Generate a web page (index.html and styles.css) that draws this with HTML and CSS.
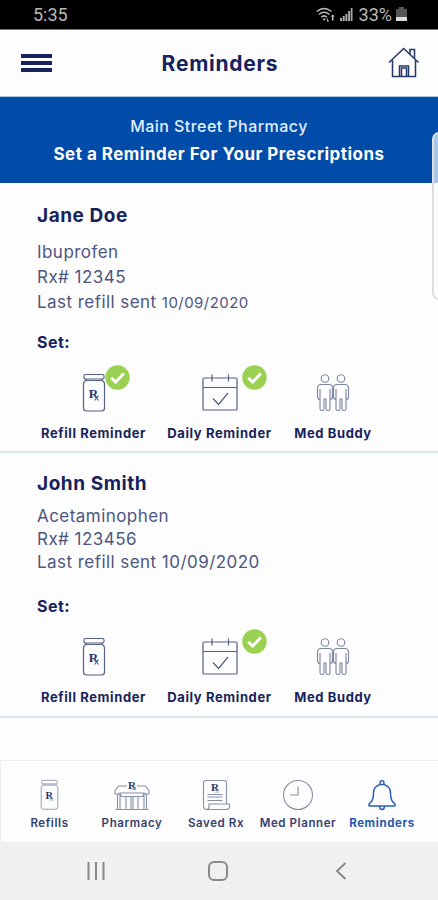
FILE: index.html
```
<!DOCTYPE html>
<html lang="en">
<head>
<meta charset="UTF-8">
<meta name="viewport" content="width=device-width, initial-scale=1">
<title>Reminders</title>
<link rel="stylesheet" href="styles.css">
</head>
<body>
<!-- shared icons -->
<svg class="defs" width="0" height="0">
  <symbol id="bottle" viewBox="0 0 24 40">
    <rect x="2" y="1.500" width="20" height="4.500" rx="1.500"/>
    <path d="M4 6v1.500Q1.500 8.500 1.500 11v24Q1.500 38 4.500 38h15q3 0 3-3V11Q22.500 8.500 20 7.500V6M4 7.500h16"/>
    <text x="11.500" y="25" class="rx">R</text>
    <path d="M12.500 22.500l4 5M16.500 22.500l-4 5"/>
  </symbol>
  <symbol id="calendar" viewBox="0 0 38 38">
    <path d="M3 4h32q1 0 1 1v30q0 1-1 1H3q-1 0-1-1V5q0-1 1-1zM2 13.500h34M11 .5v7M27.500 .5v7M12 24.500l5.500 6L27 19"/>
  </symbol>
  <symbol id="buddy" viewBox="0 0 34 40">
    <g id="person">
      <circle cx="9" cy="5.500" r="3.800"/>
      <path d="M5 11.500h8q3.500 0 3.500 4v8q0 3-2.500 3V36q0 1.500-2 1.500T10 36V26H8v10q0 1.500-2 1.500T4 36v-9.500q-2.500 0-2.500-3v-8q0-4 3.500-4zM4 16v11M14 16v11"/>
    </g>
    <use href="#person" x="16"/>
  </symbol>
  <symbol id="tick" viewBox="0 0 25 25">
    <circle cx="12.500" cy="12.500" r="12.200" fill="#9bd152" stroke="none"/>
    <path d="M6.300 12.700l4.300 4.300 8.200-8.500" fill="none" stroke="#fff" stroke-width="3"/>
  </symbol>
</svg>

<div class="status">
  <span class="time">5:35</span>
  <div class="status-icons">
    <svg width="20" height="16" viewBox="0 0 20 16">
      <g fill="none" stroke="#bbb" stroke-width="1.500"><path d="M.8 4.500Q8 -1.500 15.500 4.500M3 7.500Q8.200 3 13.400 7.500M5.200 10.200Q8.200 7.500 11 10.200"/></g>
      <path d="M6.500 11.500h3.500L8.200 14zM11 14.500v-4l2 4zM14.500 9.500l2.200-2 2.200 2-1.400 0v4h-1.600v-4z" fill="#bbb"/>
    </svg>
    <svg width="13" height="15" viewBox="0 0 13 15"><path fill="#aaa" d="M0 11h2v3H0zM2.700 9h2v5h-2zM5.400 7h2v7h-2zM8.100 4h2v10h-2zM10.800 1h1.700v13h-1.700z"/></svg>
    <span class="percent">33%</span>
    <svg width="11" height="15" viewBox="0 0 11 15"><path d="M3 0h5v2h3v12H0V2h3z" fill="#555"/><path d="M0 10h11v4H0z" fill="#ddd"/></svg>
  </div>
</div>

<header class="header">
  <div class="menu"><i></i><i></i><i></i></div>
  <h1>Reminders</h1>
  <svg class="home" width="32" height="32" viewBox="0 0 32 32">
    <path d="M1 15.500L15.700 1.500 30.500 15.500M4.500 13v16.500h23V13M11.500 29.500V19h9v10.500M13.500 29.500V21h5v8.500M22 7V2.500h4.500v9"/>
  </svg>
</header>

<div class="banner">
  <div class="store">Main Street Pharmacy</div>
  <div class="lead">Set a Reminder For Your Prescriptions</div>
  <div class="edge-handle"></div>
</div>

<section class="patient jane">
  <h2>Jane Doe</h2>
  <div class="details">
    <p>Ibuprofen</p>
    <p>Rx# 12345</p>
    <p>Last refill sent <span class="date">10/09/2020</span></p>
  </div>
  <h3>Set:</h3>
  <div class="actions">
    <div class="action">
      <svg class="icon" width="24" height="40"><use href="#bottle"/></svg>
      <svg class="tick tick-bottle" width="25" height="25"><use href="#tick"/></svg>
      <span>Refill Reminder</span>
    </div>
    <div class="action">
      <svg class="icon" width="38" height="40"><use href="#calendar"/></svg>
      <svg class="tick tick-calendar" width="25" height="25"><use href="#tick"/></svg>
      <span>Daily Reminder</span>
    </div>
    <div class="action">
      <svg class="icon thin" width="34" height="40"><use href="#buddy"/></svg>
      <span>Med Buddy</span>
    </div>
  </div>
</section>

<section class="patient john">
  <h2>John Smith</h2>
  <div class="details">
    <p>Acetaminophen</p>
    <p>Rx# 123456</p>
    <p>Last refill sent <span class="date">10/09/2020</span></p>
  </div>
  <h3>Set:</h3>
  <div class="actions">
    <div class="action">
      <svg class="icon" width="24" height="40"><use href="#bottle"/></svg>
      <span>Refill Reminder</span>
    </div>
    <div class="action">
      <svg class="icon" width="38" height="40"><use href="#calendar"/></svg>
      <svg class="tick tick-calendar" width="25" height="25"><use href="#tick"/></svg>
      <span>Daily Reminder</span>
    </div>
    <div class="action">
      <svg class="icon thin" width="34" height="40"><use href="#buddy"/></svg>
      <span>Med Buddy</span>
    </div>
  </div>
</section>

<nav class="tabs">
  <div class="tab">
    <svg width="19" height="32"><use href="#bottle"/></svg>
    <span>Refills</span>
  </div>
  <div class="tab">
    <svg width="36" height="32" viewBox="0 0 36 32">
      <path d="M13 7H4.500L1 12v3h4v-1.500M23 7h8.500L35 12v3h-4v-1.500M1.500 30.500h33M3.500 15v15.500M6 15v15.500M30 15v15.500M32.500 15v15.500M6 14h24M7 17.500h22M6 14l1 3.500M30 14l-1 3.500M12 17.500v13M17 17.500v13M19 17.500v13M24 17.500v13"/>
      <text x="18" y="9.500" class="rx">R</text>
      <path d="M18.500 8l3 3M21.500 8l-3 3"/>
    </svg>
    <span>Pharmacy</span>
  </div>
  <div class="tab">
    <svg width="30" height="32" viewBox="0 0 30 32">
      <path d="M25.500 25V4q0-2.500-2.500-2.500H5Q2.500 1.500 2.500 4v22.500q0 4 3 4 2.500 0 2.500-3V25h20.500v2.500q0 3-3 3H5.500M6.500 15.500h15M6.500 18h15M6.500 21.500h15"/>
      <text x="14" y="12" class="rx">R</text>
      <path d="M14.500 10.500l3 3M17.500 10.500l-3 3"/>
    </svg>
    <span>Saved Rx</span>
  </div>
  <div class="tab">
    <svg width="32" height="32" viewBox="0 0 32 32">
      <circle cx="16" cy="16" r="14.500"/><path d="M16 7.500V16H8"/>
    </svg>
    <span>Med Planner</span>
  </div>
  <div class="tab active">
    <svg width="30" height="32" viewBox="0 0 30 32">
      <circle cx="15" cy="3.800" r="2"/>
      <path d="M13 5.500Q6.500 7.500 6.500 14 6.500 22 2.500 24.500q-1.500 2.500.5 2.500h24q2 0 .5-2.500-4-2.500-4-10.500 0-6.500-6.500-8.500M12.500 27q0 3.500 2.500 3.500t2.500-3.500"/>
    </svg>
    <span>Reminders</span>
  </div>
</nav>

<div class="sysbar">
  <svg width="20" height="20" viewBox="0 0 20 20"><path d="M2.500 1v18M10 1v18M17.500 1v18"/></svg>
  <svg class="sys-home" width="22" height="22" viewBox="0 0 22 22"><rect x="2" y="2" width="18" height="18" rx="5"/></svg>
  <svg width="14" height="20" viewBox="0 0 14 20"><path d="M11.500 2L3 10l8.500 8"/></svg>
</div>
</body>
</html>
```

FILE: styles.css
```
* {
  box-sizing: border-box;
  margin: 0;
  padding: 0;
}
body {
  width: 438px;
  height: 900px;
  overflow: hidden;
  background: #fdfdfe;
  color: #17235c;
  font-family: Inter, "Liberation Sans", sans-serif;
  display: flex;
  flex-direction: column;
}
svg {
  fill: none;
  display: block;
  flex: none;
}
.defs {
  display: none;
}
span, h1, h2, h3, p, .store, .lead {
  white-space: nowrap;
}

/* phone status bar */
.status {
  height: 30px;
  background: #000;
  border-bottom: 1px solid #777;
  color: #b8b8b8;
  display: flex;
  justify-content: space-between;
  align-items: center;
  padding: 0 31px 0 33px;
  font-family: Roboto, sans-serif;
  font-size: 18px;
}
.status-icons {
  display: flex;
  align-items: center;
  gap: 4px;
}
.percent {
  margin-left: 2px;
}

.header {
  height: 67px;
  padding: 0 18px 0 21px;
  border-bottom: 1px solid #a9c3e5;
  display: flex;
  align-items: center;
  justify-content: space-between;
}
.menu {
  width: 31px;
  display: grid;
  gap: 3px;
}
.menu i {
  height: 4px;
  background: #17235c;
}
h1 {
  font-size: 21px;
  font-weight: 700;
  letter-spacing: .75px;
}
.home {
  stroke: #253766;
  stroke-width: 1.500;
}

.banner {
  height: 86px;
  background: #004ca8;
  color: #fff;
  text-align: center;
  padding-top: 19px;
  position: relative;
}
.store {
  font-size: 16px;
  line-height: 20px;
  font-weight: 500;
  letter-spacing: .45px;
  color: #e3eeff;
}
.lead {
  font-size: 17px;
  line-height: 22px;
  margin-top: 7px;
  font-weight: 700;
  letter-spacing: .48px;
}
.edge-handle {
  position: absolute;
  right: -8px;
  top: 35px;
  width: 14px;
  height: 168px;
  border: 2px solid #dcdee2;
  border-radius: 8px;
  background: linear-gradient(#a9c8e6 49px, #fdfdfe 49px);
}

.patient {
  border-bottom: 2px solid #d9e5ef;
  padding-left: 37px;
}
.jane {
  height: 270px;
  padding-top: 21px;
}
.john {
  height: 265px;
  padding-top: 19px;
}
h2 {
  font-size: 19px;
  line-height: 24px;
  font-weight: 700;
  letter-spacing: .55px;
}
.details {
  font-size: 17px;
  line-height: 25px;
  color: #4c5681;
  letter-spacing: .45px;
  margin-top: 12px;
}
.jane .date {
  font-size: 15px;
}
.john .details {
  line-height: 23px;
  margin-top: 9px;
}
h3 {
  font-size: 16px;
  line-height: 20px;
  font-weight: 700;
  letter-spacing: .5px;
  margin-top: 17px;
}
.john h3 {
  margin-top: 22px;
}
.actions {
  display: grid;
  grid-template-columns: 127px 125px 102px;
  margin: 21px 0 0 -7px;
}
.action {
  position: relative;
  display: flex;
  flex-direction: column;
  align-items: center;
  font-size: 13px;
  line-height: 16px;
  font-weight: 700;
  letter-spacing: .6px;
}
.icon {
  margin-bottom: 12px;
  stroke: #566080;
  stroke-width: 1.200;
}
.thin {
  stroke: #7a849c;
  stroke-width: 1.100;
}
.tick {
  position: absolute;
  top: -8.500px;
}
.tick-bottle {
  left: 75px;
}
.tick-calendar {
  left: 85px;
}
.rx {
  font: bold 13px "Liberation Serif", serif;
  letter-spacing: 0;
  fill: #253766;
  stroke: none;
  text-anchor: middle;
}

/* bottom tabs */
.tabs {
  height: 82px;
  margin-top: auto;
  padding: 18px 0 0 6px;
  border-top: 1px solid #eceef2;
  border-left: 1px solid #eceef2;
  display: grid;
  grid-template-columns: 85px 80px 88px 76px 92px;
}
.tab {
  display: flex;
  flex-direction: column;
  align-items: center;
  gap: 4px;
  font-size: 11.500px;
  line-height: 16px;
  font-weight: 600;
  letter-spacing: .6px;
  color: #35406f;
}
.tab svg {
  stroke: #8791a5;
  stroke-width: 1.100;
}
.tab .rx {
  font-size: 11px;
}
.tab.active {
  color: #1f58ad;
  font-weight: 700;
}
.active svg {
  stroke: #2b62b5;
  stroke-width: 1.500;
}

.sysbar {
  height: 58px;
  flex: none;
  background: #f0f0f0;
  display: flex;
  align-items: center;
  justify-content: space-between;
  padding: 0 90px 0 86px;
}
.sysbar svg {
  stroke: #8a8a8a;
  stroke-width: 2;
}
.sysbar .sys-home {
  margin-right: 4px;
}
```
